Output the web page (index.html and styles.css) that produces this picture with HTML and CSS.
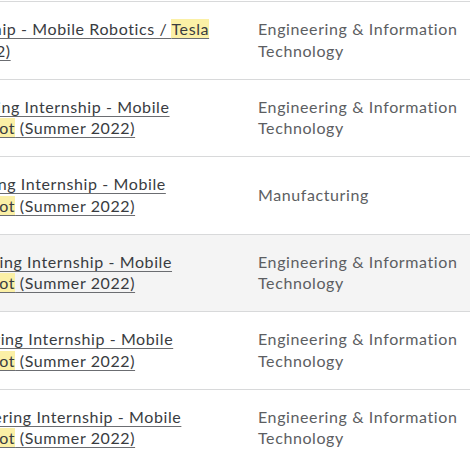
FILE: index.html
```html
<!DOCTYPE html>
<html>
<head>
<meta charset="utf-8">
<link rel="stylesheet" href="styles.css">
</head>
<body>
<div class="table">
  <div class="row">
    <div class="title"><a href="#"><span class="line">Firmware Internship - Mobile Robotics / <mark>Tesla</mark></span><span class="line"><mark>Bot</mark> (Summer 2022)</span></a></div>
    <div class="dept">Engineering &amp; Information<br>Technology</div>
  </div>
  <div class="row">
    <div class="title"><a href="#"><span class="line">Systems Engineering Internship - Mobile</span><span class="line">Robotics / <mark>Tesla Bot</mark> (Summer 2022)</span></a></div>
    <div class="dept">Engineering &amp; Information<br>Technology</div>
  </div>
  <div class="row">
    <div class="title"><a href="#"><span class="line">Process Engineering Internship - Mobile</span><span class="line">Robotics / <mark>Tesla Bot</mark> (Summer 2022)</span></a></div>
    <div class="dept">Manufacturing</div>
  </div>
  <div class="row hover">
    <div class="title"><a href="#"><span class="line">Controls Engineering Internship - Mobile</span><span class="line">Robotics / <mark>Tesla Bot</mark> (Summer 2022)</span></a></div>
    <div class="dept">Engineering &amp; Information<br>Technology</div>
  </div>
  <div class="row">
    <div class="title"><a href="#"><span class="line">Robotics Engineering Internship - Mobile</span><span class="line">Robotics / <mark>Tesla Bot</mark> (Summer 2022)</span></a></div>
    <div class="dept">Engineering &amp; Information<br>Technology</div>
  </div>
  <div class="row">
    <div class="title"><a href="#"><span class="line">Hardware Engineering Internship - Mobile</span><span class="line">Robotics / <mark>Tesla Bot</mark> (Summer 2022)</span></a></div>
    <div class="dept">Engineering &amp; Information<br>Technology</div>
  </div>
</div>
</body>
</html>
```
FILE: styles.css
```css
html, body {
  margin: 0;
  padding: 0;
  background: #ffffff;
  overflow: hidden;
}
body {
  font-family: "Lato", "Liberation Sans", sans-serif;
  font-size: 16px;
  letter-spacing: 0.6px;
  color: #5c5e62;
}
.table {
  margin-left: -136px;
  width: 620px;
  padding-top: 1px;
}
.row {
  display: grid;
  grid-template-columns: 394px 1fr;
  align-items: center;
  border-top: 1px solid #d8d9da;
  height: 76.5px;
  box-sizing: content-box;
}
.row.hover {
  background: #f4f4f4;
}
.title, .dept {
  line-height: 21.5px;
  white-space: nowrap;
}
.title {
  margin-top: -1px;
}
.title a {
  color: #393c41;
  text-decoration: underline;
  text-decoration-color: #6b6d71;
  text-decoration-thickness: 1px;
  text-underline-offset: 3px;
}
.line {
  display: block;
}
mark {
  background: #fbf0a6;
  color: inherit;
}
.dept {
  color: #5c5e62;
  margin-top: -1px;
}
```
